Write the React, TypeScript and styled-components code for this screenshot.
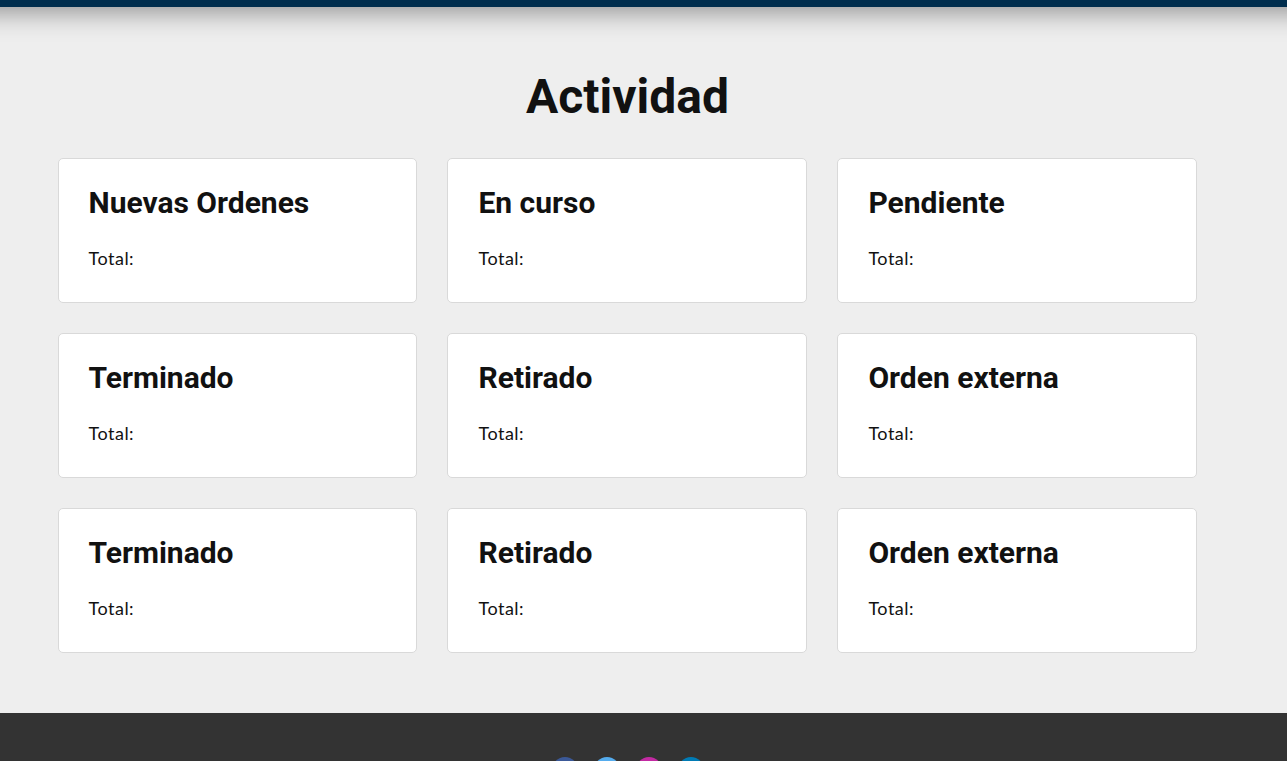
import React from "react";
import styled, { createGlobalStyle } from "styled-components";

const GlobalStyle = createGlobalStyle`
  * { box-sizing: border-box; }
  html, body { margin: 0; height: 100%; overflow: hidden; }
  body { background: #eeeeee; color: #111111; font-family: Roboto, "Liberation Sans", sans-serif; }
`;
const Page = styled.div`
  height: 761px;
  overflow: hidden;
`;
const TopBar = styled.header`
  height: 80px;
  margin: -73px -40px 0;
  background: #002d4d;
  box-shadow: 0 5px 25px rgba(0, 0, 0, 0.4);
`;
const Section = styled.main`
  height: 706px;
  padding: 60px 0 0 57.5px;
`;
const Title = styled.h1`
  width: 1140px;
  margin: 0 0 31px;
  font-size: 48px;
  font-weight: 700;
  line-height: 60px;
  text-align: center;
`;
const Grid = styled.div`
  display: grid;
  grid-template-columns: repeat(3, 359.98px);
  gap: 30px;
`;
const Card = styled.article`
  height: 145px;
  padding: 24px 30px 0;
  background: #fff;
  border: 1px solid #d9d9d9;
  border-radius: 5px;
`;
const CardTitle = styled.h2`
  margin: 0;
  font-size: 30px;
  font-weight: 700;
  line-height: 40px;
`;
const Total = styled.p`
  margin: 21px 0 0;
  font-family: Lato, sans-serif;
  font-size: 18px;
  font-weight: 400;
  letter-spacing: 0.5px;
  line-height: 28px;
`;
const Footer = styled.footer`
  display: flex;
  justify-content: center;
  gap: 16px;
  height: 80px;
  padding: 44px 32px 0 0;
  background: #333;
`;
const Social = styled.a<{ $color: string }>`
  width: 26px;
  height: 26px;
  border-radius: 50%;
  background: ${(p) => p.$color};
`;

const cards = ["Nuevas Ordenes", "En curso", "Pendiente", "Terminado", "Retirado", "Orden externa", "Terminado", "Retirado", "Orden externa"];
const socials = ["#3b5998", "#55acee", "#c32aa3", "#007bb5"];

export default function App() {
  return (
    <Page>
      <GlobalStyle />
      <TopBar />
      <Section>
        <Title>Actividad</Title>
        <Grid>
          {cards.map((name, i) => (
            <Card key={i}>
              <CardTitle>{name}</CardTitle>
              <Total>Total:</Total>
            </Card>
          ))}
        </Grid>
      </Section>
      <Footer>
        {socials.map((color) => <Social key={color} $color={color} />)}
      </Footer>
    </Page>
  );
}
